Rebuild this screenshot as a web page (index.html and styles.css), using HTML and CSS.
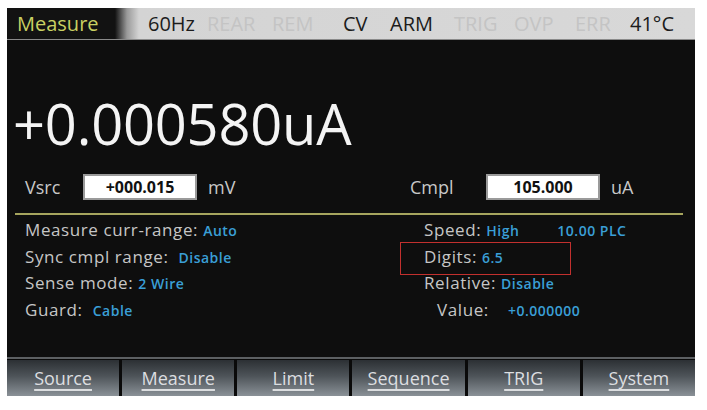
FILE: index.html
```html
<!DOCTYPE html>
<html>
<head>
<meta charset="utf-8">
<link rel="stylesheet" href="styles.css">
</head>
<body>
<div class="screen">
  <div class="status">
    <div class="tab">Measure</div>
    <div class="items">
      <span class="on">60Hz</span>
      <span class="off">REAR</span>
      <span class="off">REM</span>
      <span class="on">CV</span>
      <span class="on">ARM</span>
      <span class="off">TRIG</span>
      <span class="off">OVP</span>
      <span class="off">ERR</span>
      <span class="on">41°C</span>
    </div>
  </div>

  <div class="reading">+0.000580uA</div>

  <div class="srcrow">
    <div class="field left">
      <span class="flabel">Vsrc</span>
      <span class="box">+000.015</span>
      <span class="unit">mV</span>
    </div>
    <div class="field right">
      <span class="flabel">Cmpl</span>
      <span class="box">105.000</span>
      <span class="unit">uA</span>
    </div>
  </div>

  <div class="rule"></div>

  <div class="params">
    <div class="col">
      <div class="row">Measure curr-range: <span class="val">Auto</span></div>
      <div class="row">Sync cmpl range: &nbsp;<span class="val">Disable</span></div>
      <div class="row">Sense mode: <span class="val">2 Wire</span></div>
      <div class="row">Guard: &nbsp;<span class="val">Cable</span></div>
    </div>
    <div class="col">
      <div class="row">Speed: <span class="val high">High</span><span class="val">10.00 PLC</span></div>
      <div class="row marked">Digits: <span class="val">6.5</span></div>
      <div class="row">Relative: <span class="val">Disable</span></div>
      <div class="row indent">Value: <span class="val rel">+0.000000</span></div>
    </div>
  </div>

  <div class="buttons">
    <div class="btn"><span>Source</span></div>
    <div class="btn"><span>Measure</span></div>
    <div class="btn"><span>Limit</span></div>
    <div class="btn"><span>Sequence</span></div>
    <div class="btn"><span>TRIG</span></div>
    <div class="btn"><span>System</span></div>
  </div>
</div>
</body>
</html>
```

FILE: styles.css
```css
html, body {
  margin: 0;
  padding: 0;
  background: #ffffff;
}
body {
  font-family: "Open Sans", "DejaVu Sans", sans-serif;
}
.screen {
  margin: 8px 0 0 7px;
  width: 688px;
  height: 388px;
  background: #0e0e0e;
  display: flex;
  flex-direction: column;
}
.status {
  height: 31px;
  display: flex;
  align-items: center;
  background: linear-gradient(to right, #121212 0, #121212 108px, #9a9a9a 120px, #d4d4d4 132px, #d8d8d8 100%);
  border-bottom: 1px solid #8a8a8a;
}
.tab {
  width: 141px;
  padding-left: 10px;
  box-sizing: border-box;
  color: #c9d062;
  font-size: 20px;
  line-height: 31px;
}
.items {
  display: grid;
  grid-template-columns: 59px 65px 71px 47px 64px 60px 61px 55px 60px;
  font-size: 20px;
  line-height: 31px;
}
.on { color: #1c1c1c; }
.off { color: #c4c4c4; }

.reading {
  margin-top: 55px;
  margin-left: 6px;
  color: #f4f4f4;
  font-size: 56px;
  line-height: 1;
  height: 57px;
  letter-spacing: -0.2px;
}
.srcrow {
  margin-top: 22px;
  display: grid;
  grid-template-columns: 385px 1fr;
  padding-left: 18px;
}
.field {
  display: flex;
  align-items: center;
  height: 26px;
}
.flabel {
  color: #c8c8c8;
  font-size: 18px;
}
.left .flabel { width: 58px; }
.right .flabel { width: 76px; }
.box {
  width: 114px;
  height: 26px;
  box-sizing: border-box;
  background: #ffffff;
  border: 2px solid #9a9a9a;
  color: #111;
  font-weight: 700;
  font-size: 16px;
  text-align: center;
  line-height: 22px;
}
.unit {
  color: #c8c8c8;
  font-size: 18px;
  margin-left: 11px;
}
.rule {
  margin: 13px 12px 0 8px;
  height: 2px;
  background: #a6a55e;
}
.params {
  margin-top: 2px;
  display: grid;
  grid-template-columns: 399px 1fr;
  padding-left: 18px;
}
.row {
  height: 26.5px;
  line-height: 26px;
  color: #c6c6c6;
  font-size: 17px;
  white-space: nowrap;
  letter-spacing: 0.6px;
}
.val {
  color: #3a9fd6;
  font-size: 14px;
  font-weight: 600;
  letter-spacing: 0.5px;
}
.high {
  display: inline-block;
  width: 71px;
}
.marked {
  position: relative;
}
.marked::before {
  content: "";
  position: absolute;
  left: -24px;
  top: -2px;
  width: 169px;
  height: 31px;
  border: 1.5px solid #c2302e;
}
.indent { padding-left: 13px; }
.rel { margin-left: 14px; }

.buttons {
  margin-top: auto;
  border-top: 2px solid #5c5f62;
  padding-top: 1px;
  display: grid;
  grid-template-columns: repeat(6, 1fr);
  gap: 3px;
  background: #0a0a0a;
}
.btn {
  height: 36px;
  background: linear-gradient(to bottom, #2c3034 0%, #4e5459 45%, #8a9197 100%);
  display: flex;
  align-items: center;
  justify-content: center;
}
.btn span {
  color: #dcdee0;
  font-size: 18px;
  text-decoration: underline;
  text-decoration-thickness: 2px;
  text-underline-offset: 4px;
}
```
